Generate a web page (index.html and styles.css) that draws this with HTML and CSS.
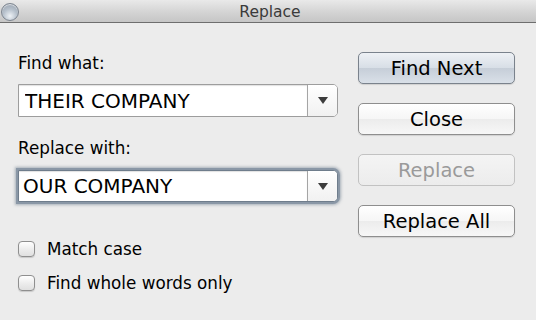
FILE: index.html
```html
<!DOCTYPE html>
<html lang="en">
<head>
    <meta charset="UTF-8">
    <meta name="viewport" content="width=device-width, initial-scale=1.0">
    <title>Replace</title>
    <link rel="stylesheet" href="styles.css">
</head>
<body>
    <div class="window">
        <div class="titlebar">
            <span class="close-dot"></span>
            <span class="title">Replace</span>
        </div>

        <div class="content">
            <div class="fields">
                <label class="field-label">Find what:</label>
                <div class="combo">
                    <input class="combo-input" type="text" value="THEIR COMPANY" readonly>
                    <span class="combo-arrow"></span>
                </div>

                <label class="field-label second">Replace with:</label>
                <div class="combo focused">
                    <input class="combo-input" type="text" value="OUR COMPANY" readonly>
                    <span class="combo-arrow"></span>
                </div>

                <div class="options">
                    <label class="option"><span class="check"></span>Match case</label>
                    <label class="option"><span class="check"></span>Find whole words only</label>
                </div>
            </div>

            <div class="buttons">
                <button class="btn default">Find Next</button>
                <button class="btn">Close</button>
                <button class="btn" disabled>Replace</button>
                <button class="btn">Replace All</button>
            </div>
        </div>
    </div>
</body>
</html>
```

FILE: styles.css
```css
html, body { margin: 0; padding: 0; }
body { font-family: "DejaVu Sans", "Liberation Sans", sans-serif; background: #ececec; width: 536px; height: 320px; overflow: hidden; }

.window { width: 536px; height: 320px; background: #ececec; }

/* title bar */
.titlebar { height: 22px; border-bottom: 1px solid #6e6e6e; background: linear-gradient(#e9e9e9, #d2d2d2 60%, #c6c6c6); display: flex; align-items: center; justify-content: center; position: relative; }
.title { font-size: 15.5px; color: #3a3a3a; padding-left: 4px; padding-top: 1px; }
.close-dot { position: absolute; left: 1px; top: 3px; width: 16px; height: 16px; border-radius: 50%; border: 1px solid #7d8590; background: radial-gradient(circle at 50% 75%, #eef2f6 0%, #b9c3ce 45%, #8e99a6 100%); box-shadow: inset 0 1px 1px rgba(255,255,255,0.7); }

/* layout */
.content { display: flex; padding: 29px 0 0 18px; gap: 20px; }
.fields { width: 320px; display: flex; flex-direction: column; }
.field-label { font-size: 16.8px; line-height: 20px; color: #000; margin-bottom: 11px; padding-top: 1px; }
.field-label.second { margin-top: 20px; margin-bottom: 12px; }

/* combo boxes */
.combo { display: flex; height: 33px; box-sizing: border-box; border: 1px solid #9d9d9d; border-radius: 0 5px 5px 0; background: #fff; }
.combo-input { flex: 1; min-width: 0; border: none; outline: none; margin: 0; padding: 0 0 0 6px; font-family: "DejaVu Sans", "Liberation Sans", sans-serif; font-size: 20px; color: #000; background: #fff; box-shadow: inset 0 1px 1px rgba(0,0,0,0.12); }
.combo-arrow { width: 29px; border-left: 1px solid #a5a5a5; border-radius: 0 4px 4px 0; background: linear-gradient(#ffffff, #f1f1f1); display: flex; align-items: center; justify-content: center; }
.combo-arrow::after { content: ""; width: 0; height: 0; border-left: 5px solid transparent; border-right: 5px solid transparent; border-top: 7px solid #3c3c3c; }

.combo.focused { height: 32px; border: 1px solid #6f7d8c; box-shadow: 0 0 0 2px #8a97a6, 0 0 3px 3px rgba(110,125,142,0.55); }
.combo.focused .combo-input { padding-left: 4px; }

/* checkboxes */
.options { margin-top: 38px; display: flex; flex-direction: column; gap: 17px; }
.option { display: flex; align-items: center; height: 17px; font-size: 16.8px; color: #000; }
.check { width: 17px; height: 16px; box-sizing: border-box; border: 1px solid #8f8f8f; border-radius: 4px; background: linear-gradient(#ffffff, #ececec 55%, #e0e0e0); box-shadow: 0 1px 1px rgba(0,0,0,0.15); margin-right: 12px; }

/* buttons */
.buttons { width: 157px; display: flex; flex-direction: column; gap: 19px; }
.btn { height: 32px; box-sizing: border-box; border: 1px solid #8e8e8e; border-radius: 5px; background: linear-gradient(#ffffff, #f6f6f6 50%, #ececec 51%, #f7f7f7); font-family: "DejaVu Sans", "Liberation Sans", sans-serif; font-size: 19.5px; color: #000; padding: 0; box-shadow: 0 1px 1px rgba(0,0,0,0.12); }
.btn.default { border-color: #7a828c; background: linear-gradient(#eef1f5, #d7dee6 50%, #c6ced8 51%, #d9e0e8); }
.btn:disabled { color: #9a9a9a; border-color: #c2c2c2; background: linear-gradient(#f4f4f4, #ececec); box-shadow: none; }
```
